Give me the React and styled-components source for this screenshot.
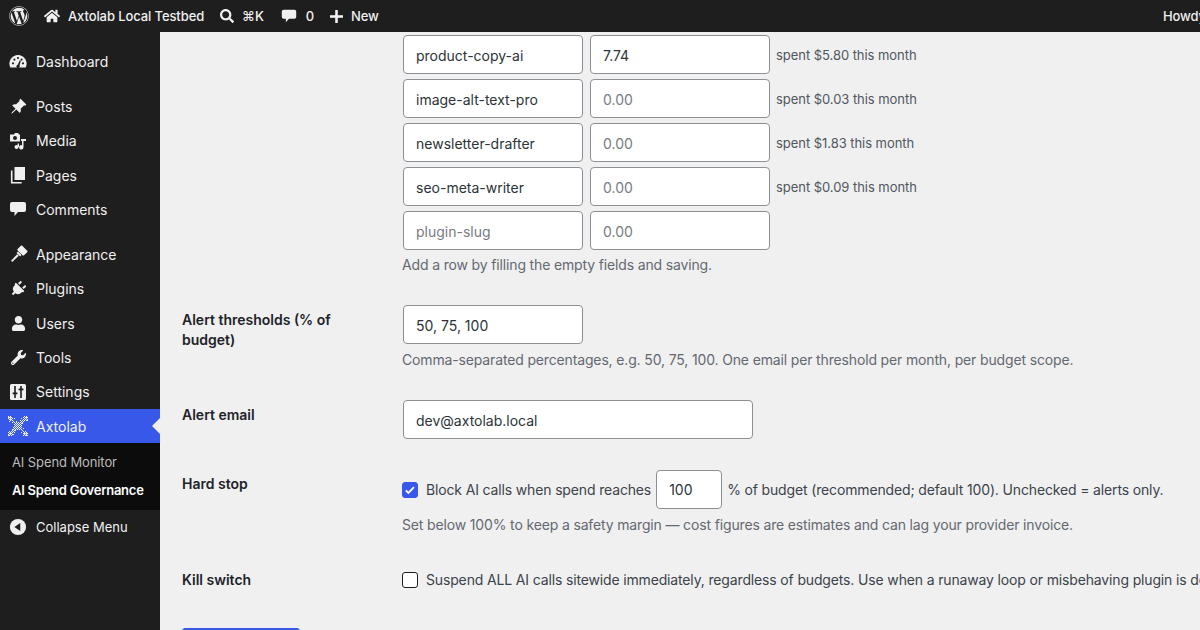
import React from "react";
import styled, { createGlobalStyle } from "styled-components";
import {
  FaWordpress,
  FaHome,
  FaSearch,
  FaPlug,
  FaUser,
  FaWrench,
} from "react-icons/fa";
import { BsPinAngleFill } from "react-icons/bs";

const GlobalStyle = createGlobalStyle`
  html, body {
    margin: 0;
    padding: 0;
    height: 100%;
    overflow: hidden;
    background: #f0f0f1;
  }
  body {
    font-family: Inter, "Noto Sans", "Liberation Sans", sans-serif;
    font-size: 13px;
    color: #3c434a;
  }
  * { box-sizing: border-box; }
`;

/* ---------- icons ---------- */

const DashIcon = () => (
  <svg viewBox="0 0 20 20" width="20" height="20">
    <path d="M2.3 16.5 A8.6 8.6 0 1 1 17.7 16.5 Z" fill="currentColor" />
    <g fill="#1e1e1e">
      <circle cx="5" cy="12.3" r="1.1" />
      <circle cx="6.4" cy="8.6" r="1.1" />
      <circle cx="10" cy="7" r="1.1" />
      <circle cx="13.6" cy="8.6" r="1.1" />
      <circle cx="15" cy="12.3" r="1.1" />
      <path d="M9 15.5 L11.8 9.2 L12.9 9.7 L11 15.9 Z" />
      <circle cx="10" cy="15.4" r="1.6" />
    </g>
  </svg>
);

const MediaIcon = () => (
  <svg viewBox="0 0 20 20" width="20" height="20" fill="currentColor">
    <path d="M2 3.5h4l1-1.5h3l1 1.5h1v7H2z" />
    <circle cx="7" cy="7" r="2" fill="#1e1e1e" />
    <path d="M13 8h5v2h-2.5v6.3a2.2 2.2 0 1 1-1.5-2.1V10H13z" />
    <circle cx="8.5" cy="16" r="2" />
    <path d="M9.6 16V12.5h1.4V16z" />
  </svg>
);

const PageIcon = () => (
  <svg viewBox="0 0 20 20" width="20" height="20">
    <rect x="6.5" y="2" width="10.5" height="13" fill="currentColor" />
    <path d="M3.7 5.5v12.3h10" fill="none" stroke="currentColor" strokeWidth="1.6" />
  </svg>
);

const BubbleIcon = ({ size = 20 }) => (
  <svg viewBox="0 0 20 20" width={size} height={size} fill="currentColor">
    <path d="M4 3h12a2 2 0 0 1 2 2v6a2 2 0 0 1-2 2h-6l-3.5 4v-4H4a2 2 0 0 1-2-2V5a2 2 0 0 1 2-2z" />
  </svg>
);

const BrushIcon = () => (
  <svg viewBox="0 0 20 20" width="20" height="20" fill="currentColor">
    <g transform="rotate(45 10 10)">
      <rect x="5.5" y="0.5" width="9" height="6.5" rx="1" />
      <rect x="7.5" y="7.5" width="5" height="2" />
      <path d="M8.8 10h2.4l-.4 9h-1.6z" />
    </g>
  </svg>
);

const SettingsIcon = () => (
  <svg viewBox="0 0 20 20" width="20" height="20">
    <rect x="2" y="2" width="16" height="16" rx="1.5" fill="currentColor" />
    <g fill="#1e1e1e">
      <rect x="6.2" y="4" width="1.6" height="12" />
      <rect x="4.6" y="10.5" width="4.8" height="1.8" />
      <rect x="12.2" y="4" width="1.6" height="12" />
      <rect x="10.6" y="6.5" width="4.8" height="1.8" />
    </g>
  </svg>
);

// dithered "X" mark of the Axtolab menu entry
const PixelX = () => {
  const cells = [];
  for (let y = 0; y < 20; y++) {
    for (let x = 0; x < 20; x++) {
      const d = Math.min(Math.abs(x - y), Math.abs(x + y - 19));
      const c = Math.max(Math.abs(x - 9.5), Math.abs(y - 9.5));
      const end = c > 6.5;
      if (c < 3 && (x + y) % 2 === 0) cells.push([x, y]);
      else if (d <= 1) {
        if ((x + y) % 2 === 0 || (end && x % 2 === 0)) cells.push([x, y]);
      } else if (d <= 3 && (end || c < 4)) {
        if ((x + y) % 2 === 0 && (x + 2 * y) % 3 !== 0) cells.push([x, y]);
      } else if (d <= 4 && (x * 3 + y * 5) % 7 === 0) cells.push([x, y]);
    }
  }
  return (
    <svg viewBox="0 0 20 20" width="20" height="20" fill="#e9edfd">
      {cells.map(([x, y]) => (
        <rect key={`${x}-${y}`} x={x} y={y} width="1.05" height="1.05" />
      ))}
    </svg>
  );
};

const CollapseIcon = () => (
  <svg viewBox="0 0 20 20" width="18" height="18">
    <circle cx="10" cy="10" r="9" fill="currentColor" />
    <path d="M12.5 5.5v9L6 10z" fill="#1e1e1e" />
  </svg>
);

const PlusIcon = () => (
  <svg viewBox="0 0 14 14" width="13" height="13" fill="currentColor">
    <rect x="5.6" y="0" width="2.8" height="14" />
    <rect x="0" y="5.6" width="14" height="2.8" />
  </svg>
);

const CheckMark = () => (
  <svg viewBox="0 0 16 16" width="14" height="14">
    <path d="M3.2 8.3l3 3 6.3-6.6" fill="none" stroke="#fff" strokeWidth="2" />
  </svg>
);

/* ---------- data ---------- */

const menu = [
  { label: "Dashboard", icon: <DashIcon /> },
  { sep: true },
  { label: "Posts", icon: <BsPinAngleFill size={17} /> },
  { label: "Media", icon: <MediaIcon /> },
  { label: "Pages", icon: <PageIcon /> },
  { label: "Comments", icon: <BubbleIcon /> },
  { sep: true },
  { label: "Appearance", icon: <BrushIcon /> },
  { label: "Plugins", icon: <FaPlug size={16} style={{ transform: "rotate(45deg)" }} /> },
  { label: "Users", icon: <FaUser size={15} /> },
  { label: "Tools", icon: <FaWrench size={15} /> },
  { label: "Settings", icon: <SettingsIcon /> },
  { label: "Axtolab", icon: <PixelX />, current: true },
];

const budgets = [
  { slug: "product-copy-ai", amount: "7.74", spent: "$5.80" },
  { slug: "image-alt-text-pro", amount: "", spent: "$0.03" },
  { slug: "newsletter-drafter", amount: "", spent: "$1.83" },
  { slug: "seo-meta-writer", amount: "", spent: "$0.09" },
  { slug: "", amount: "", spent: null },
];

/* ---------- page ---------- */

export default function App() {
  return (
    <>
      <GlobalStyle />
      <Page>
        <AdminBar>
          <LogoItem>
            <FaWordpress size={20} />
          </LogoItem>
          <BarItem>
            <FaHome size={16} />
            Axtolab Local Testbed
          </BarItem>
          <BarItem>
            <FaSearch size={14} />
            ⌘K
          </BarItem>
          <BarItem>
            <BubbleIcon size={18} />
            0
          </BarItem>
          <BarItem>
            <PlusIcon />
            New
          </BarItem>
          <BarRight>
            Howdy, admin
            <Avatar />
          </BarRight>
        </AdminBar>

        <Body>
          <Sidebar>
            <Menu>
              {menu.map((m, i) =>
                m.sep ? (
                  <Separator key={i} />
                ) : (
                  <MenuItem key={m.label} $current={m.current}>
                    <IconBox>{m.icon}</IconBox>
                    {m.label}
                  </MenuItem>
                )
              )}
              <Submenu>
                <SubItem>AI Spend Monitor</SubItem>
                <SubItem $current>AI Spend Governance</SubItem>
              </Submenu>
              <CollapseItem>
                <IconBox>
                  <CollapseIcon />
                </IconBox>
                Collapse Menu
              </CollapseItem>
            </Menu>
          </Sidebar>

          <Main>
            <Row $top={3}>
              <Th />
              <Td>
                {budgets.map((b, i) => (
                  <BudgetLine key={i}>
                    <Input
                      $w={180}
                      defaultValue={b.slug}
                      placeholder="plugin-slug"
                    />
                    <Input $w={180} defaultValue={b.amount} placeholder="0.00" />
                    {b.spent && <Spent>spent {b.spent} this month</Spent>}
                  </BudgetLine>
                ))}
                <Description $mt={1}>
                  Add a row by filling the empty fields and saving.
                </Description>
              </Td>
            </Row>

            <Row>
              <Th>Alert thresholds (% of budget)</Th>
              <Td>
                <Input $w={180} defaultValue="50, 75, 100" />
                <Description>
                  Comma-separated percentages, e.g. 50, 75, 100. One email per
                  threshold per month, per budget scope.
                </Description>
              </Td>
            </Row>

            <Row>
              <Th>Alert email</Th>
              <Td>
                <Input $w={350} defaultValue="dev@axtolab.local" />
              </Td>
            </Row>

            <Row>
              <Th>Hard stop</Th>
              <Td>
                <CheckLine $h={40}>
                  <Checkbox $checked>
                    <CheckMark />
                  </Checkbox>
                  Block AI calls when spend reaches
                  <Input $w={66} defaultValue="100" />
                  % of budget (recommended; default 100). Unchecked = alerts only.
                </CheckLine>
                <Description>
                  Set below 100% to keep a safety margin — cost figures are
                  estimates and can lag your provider invoice.
                </Description>
              </Td>
            </Row>

            <Row>
              <Th>Kill switch</Th>
              <Td>
                <CheckLine $h={28}>
                  <Checkbox />
                  Suspend ALL AI calls sitewide immediately, regardless of
                  budgets. Use when a runaway loop or misbehaving plugin is
                  detected.
                </CheckLine>
              </Td>
            </Row>

            <Submit>Save Changes</Submit>
          </Main>
        </Body>
      </Page>
    </>
  );
}

/* ================= STYLES ================= */

const Page = styled.div`
  width: 1280px;
  height: 100vh;
  display: flex;
  flex-direction: column;
`;

const AdminBar = styled.div`
  height: 32px;
  flex-shrink: 0;
  background: #1e1e1e;
  color: #f0f0f1;
  display: flex;
  align-items: center;
  font-size: 13px;
  font-weight: 500;
  letter-spacing: -0.1px;
`;

const LogoItem = styled.div`
  width: 36px;
  height: 32px;
  display: flex;
  align-items: center;
  justify-content: center;
  padding-left: 1px;
`;

const BarItem = styled.div`
  height: 32px;
  padding: 0 8px;
  display: flex;
  align-items: center;
  gap: 8px;

  svg {
    color: #f0f0f1;
  }
`;

const BarRight = styled(BarItem)`
  margin-left: auto;
  gap: 6px;
`;

const Avatar = styled.span`
  width: 16px;
  height: 16px;
  background: #8c8f94;
  display: inline-block;
`;

const Body = styled.div`
  flex: 1;
  display: flex;
  min-height: 0;
`;

const Sidebar = styled.nav`
  width: 160px;
  flex-shrink: 0;
  background: #1e1e1e;
`;

const Menu = styled.div`
  padding-top: 12px;
`;

const Separator = styled.div`
  height: 11px;
`;

const MenuItem = styled.div`
  position: relative;
  height: 34.3px;
  display: flex;
  align-items: center;
  font-size: 14px;
  color: #f0f0f1;
  background: ${({ $current }) => ($current ? "#3858e9" : "transparent")};

  &::after {
    content: "";
    display: ${({ $current }) => ($current ? "block" : "none")};
    position: absolute;
    right: 0;
    top: 50%;
    margin-top: -8px;
    border: 8px solid transparent;
    border-right-color: #f0f0f1;
    border-left-width: 0;
  }
`;

const IconBox = styled.span`
  width: 36px;
  height: 34px;
  flex-shrink: 0;
  display: flex;
  align-items: center;
  justify-content: center;
  color: #f0f0f1;
`;

const Submenu = styled.div`
  background: #0c0c0c;
  padding: 5px 0 6px;
`;

const SubItem = styled.div`
  padding: 5px 12px;
  font-size: 13px;
  line-height: 18px;
  white-space: nowrap;
  letter-spacing: ${({ $current }) => ($current ? "-0.25px" : "-0.1px")};
  color: ${({ $current }) => ($current ? "#fff" : "#bcbcbc")};
  font-weight: ${({ $current }) => ($current ? 600 : 400)};
`;

const CollapseItem = styled.div`
  height: 34px;
  display: flex;
  align-items: center;
  font-size: 13px;
  color: #f0f0f1;
`;

const Main = styled.main`
  flex: 1;
  padding-left: 22px;
  overflow: hidden;
`;

const Row = styled.div`
  display: grid;
  grid-template-columns: 220px 1fr;
  padding: ${({ $top }) => ($top !== undefined ? $top : 15)}px 0 15px;
`;

const Th = styled.div`
  width: 200px;
  padding-top: 5px;
  font-size: 14px;
  font-weight: 600;
  line-height: 20px;
  color: #1d2327;
`;

const Td = styled.div`
  min-width: 0;
`;

const BudgetLine = styled.div`
  display: flex;
  align-items: center;
  gap: 5px;
  margin-bottom: 5px;
`;

const Input = styled.input`
  width: ${({ $w }) => $w}px;
  height: 39px;
  margin: 0 1px;
  padding: 1px 12px 0;
  border: 1px solid #8c8f94;
  border-radius: 4px;
  background: #fff;
  font-family: inherit;
  font-size: 14px;
  color: #2c3338;
  outline: none;

  &::placeholder {
    color: #787c82;
  }
`;

const Spent = styled.span`
  font-size: 13px;
  color: #50575e;
  letter-spacing: -0.05px;
`;

const Description = styled.p`
  margin: ${({ $mt }) => ($mt !== undefined ? $mt : 6)}px 0 0;
  font-size: 14px;
  line-height: 20px;
  letter-spacing: -0.15px;
  color: #646970;
`;

const CheckLine = styled.label`
  height: ${({ $h }) => $h}px;
  display: flex;
  align-items: center;
  gap: 4px;
  font-size: 14px;
  letter-spacing: -0.15px;
  color: #3c434a;
  white-space: nowrap;
`;

const Checkbox = styled.span`
  width: 16px;
  height: 16px;
  margin: 2px 4px 0 0;
  border-radius: 3px;
  flex-shrink: 0;
  display: flex;
  align-items: center;
  justify-content: center;
  background: ${({ $checked }) => ($checked ? "#3858e9" : "#fff")};
  border: 1px solid ${({ $checked }) => ($checked ? "#3858e9" : "#1e1e1e")};
`;

const Submit = styled.button`
  margin-top: 20px;
  height: 32px;
  padding: 0 12px;
  width: 118px;
  border: 1px solid #3858e9;
  border-radius: 3px;
  background: #3858e9;
  color: #fff;
  font-family: inherit;
  font-size: 13px;
`;
